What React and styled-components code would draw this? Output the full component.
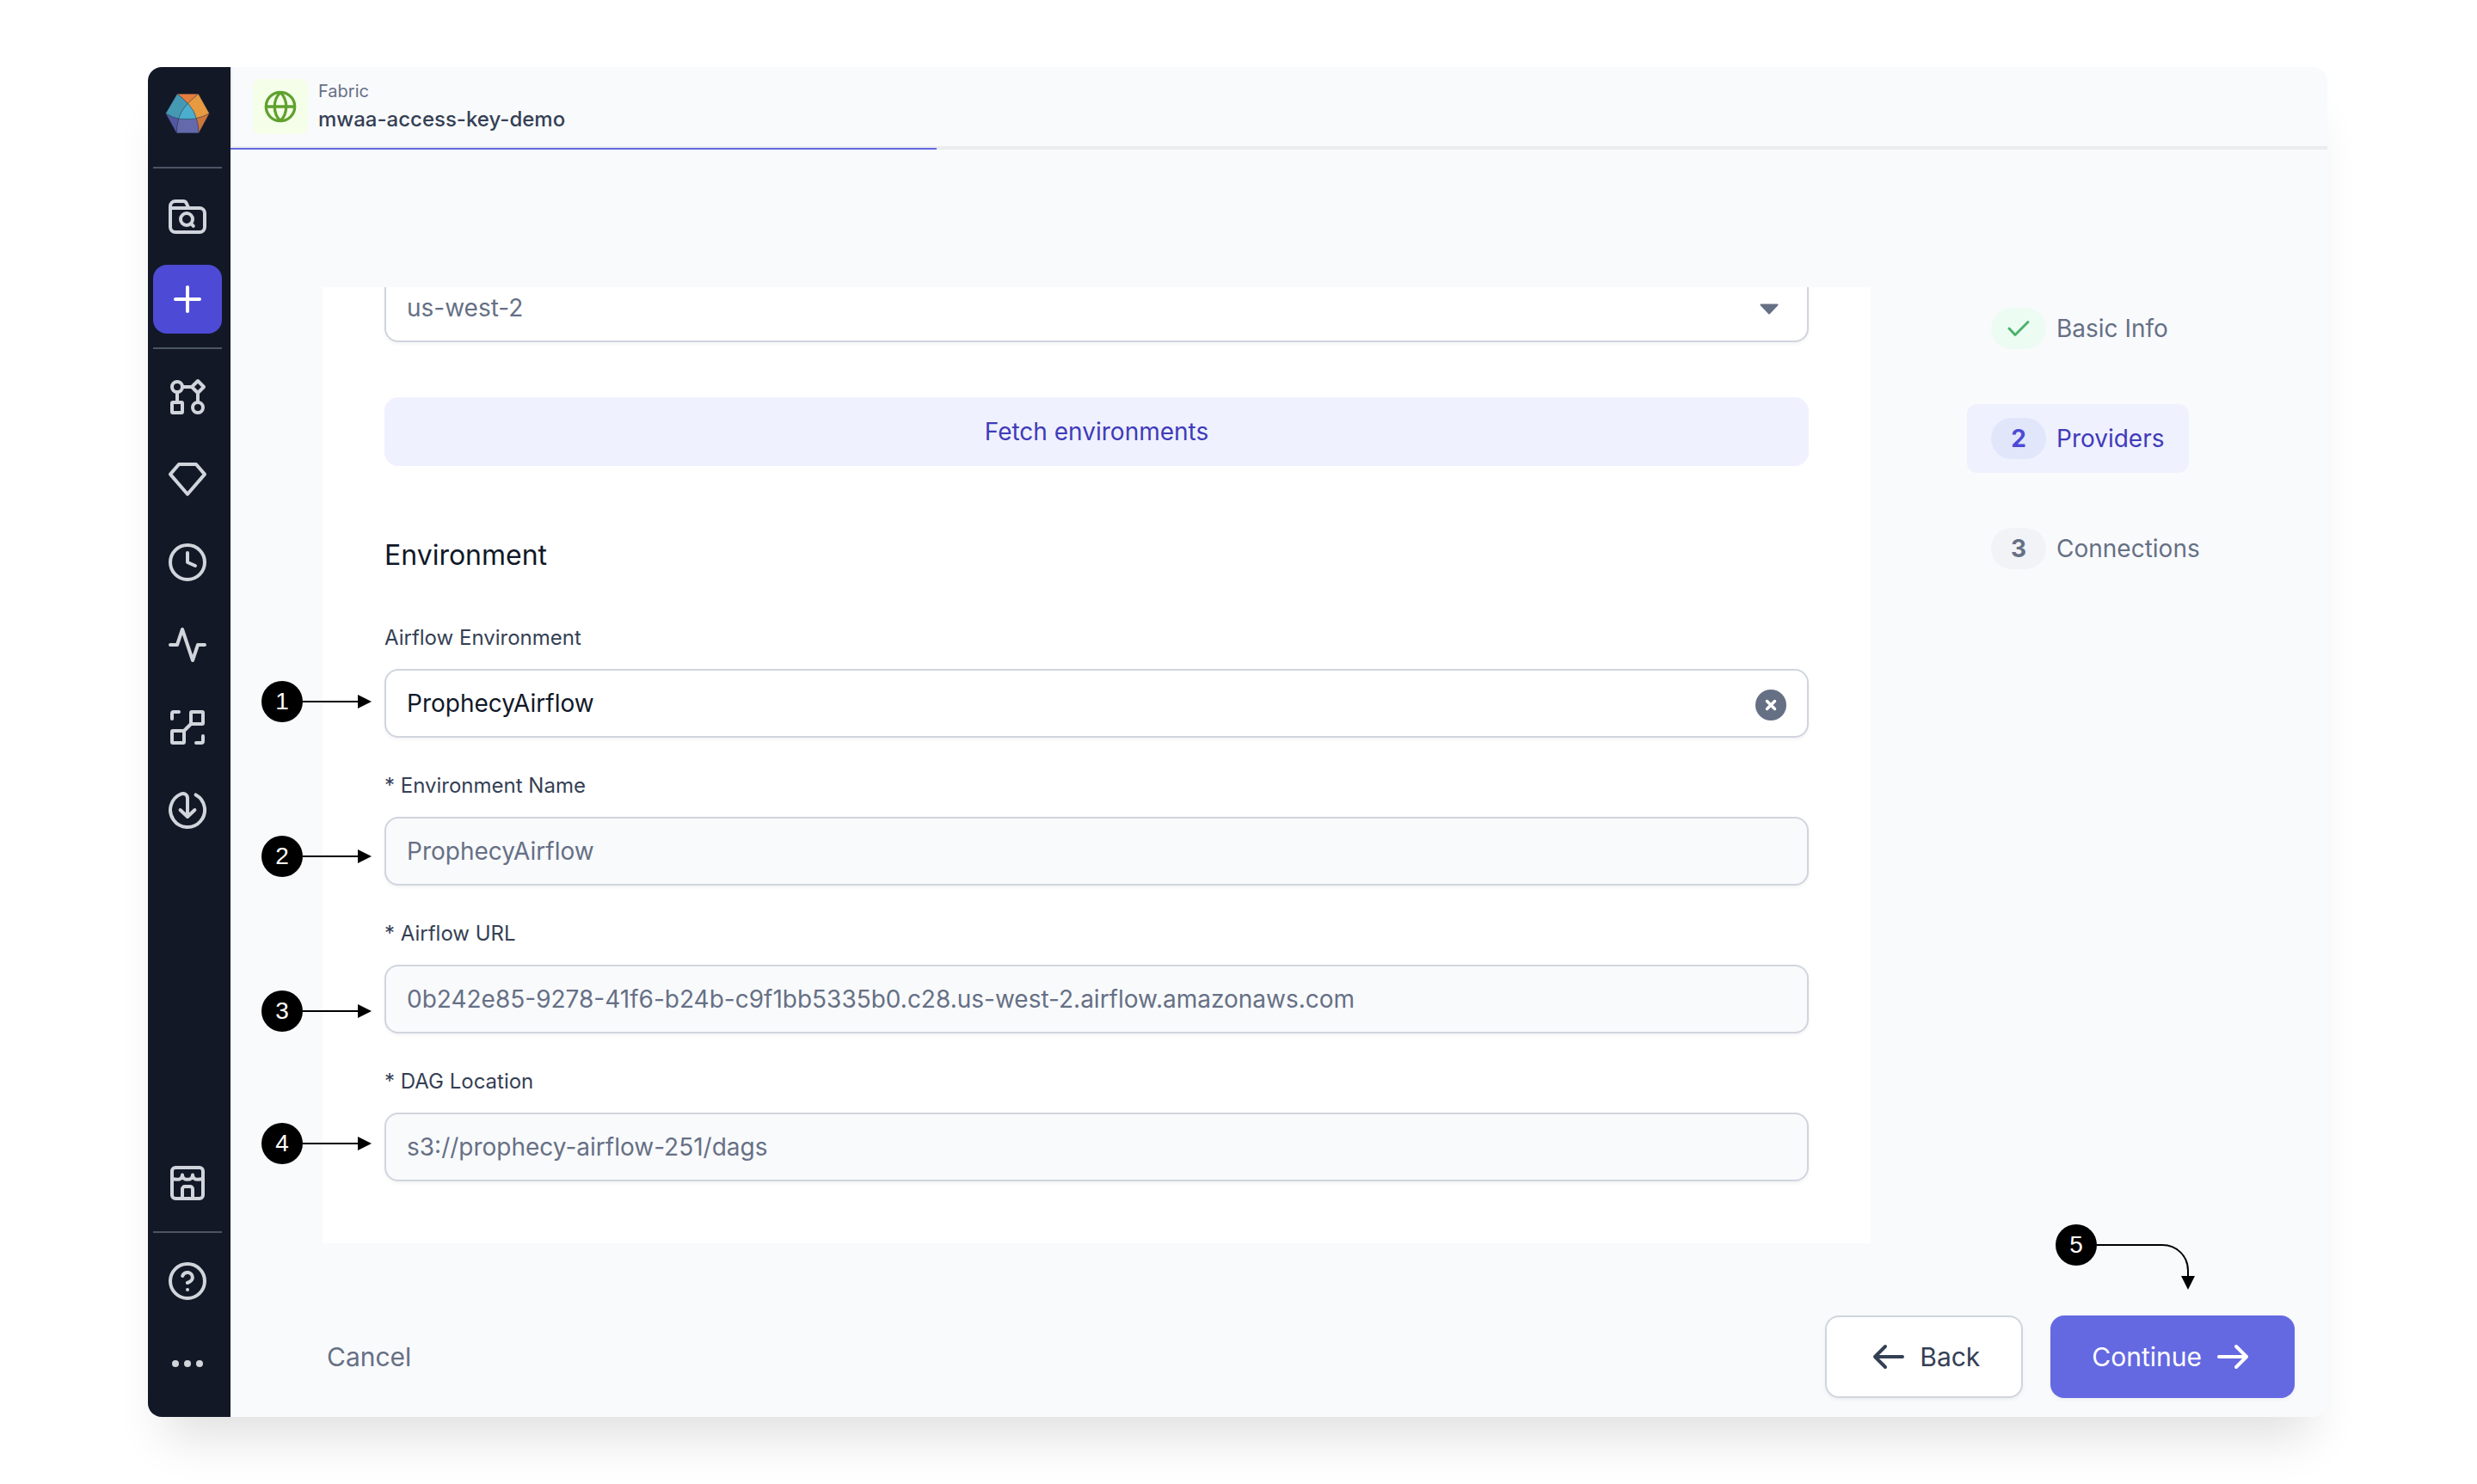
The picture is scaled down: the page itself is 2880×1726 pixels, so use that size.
import React, { useState } from "react";
import styled, { createGlobalStyle, css } from "styled-components";

const color = {
  ink: "#101828",
  label: "#344054",
  muted: "#667085",
  line: "#d0d5dd",
  track: "#ebecee",
  surface: "#f9fafc",
  navy: "#131827",
  navIcon: "#d1d5db",
  navLine: "#4b5565",
  indigo: "#6469e1",
  indigoStrong: "#4d4bd5",
  indigoText: "#403bb9",
  indigoSoft: "#eff1fe",
  indigoPill: "#e1e6fb",
};

const GlobalStyle = createGlobalStyle`
  *, *::before, *::after { box-sizing: border-box; }
  body {
    margin: 0;
    background: #fff;
    color: ${color.ink};
    font-family: Inter, "Liberation Sans", sans-serif;
  }
  button, input, select { font: inherit; color: inherit; margin: 0; }
  svg { display: block; flex: none; }
`;

const Page = styled.div`
  padding: 78px 174px 78px 172px;
`;

const Window = styled.div`
  position: relative;
  display: flex;
  min-height: calc(100vh - 156px);
  border-radius: 16px;
  background: ${color.surface};
  box-shadow: 0 44px 52px -20px rgba(0, 0, 0, 0.12);
`;

/* ---------- sidebar ---------- */

const Sidebar = styled.nav`
  display: flex;
  flex: none;
  flex-direction: column;
  gap: 16px;
  width: 96px;
  padding: 14px 10px 22px 6px;
  border-radius: 16px 0 0 16px;
  background: ${color.navy};
`;

const Brand = styled.a`
  display: flex;
  align-items: center;
  justify-content: center;
  height: 80px;
  margin-bottom: 6px;
`;

const NavButton = styled.button`
  display: flex;
  align-items: center;
  justify-content: center;
  width: 80px;
  height: 80px;
  padding: 0;
  border: 0;
  border-radius: 16px;
  background: ${(p) => (p.$active ? color.indigoStrong : "transparent")};
  color: ${(p) => (p.$active ? "#fff" : color.navIcon)};
  cursor: pointer;
`;

const NavDivider = styled.hr`
  width: 80px;
  height: 2px;
  margin: 0;
  border: 0;
  background: ${color.navLine};
`;

const NavSpacer = styled.div`
  flex: 1;
`;

/* ---------- header ---------- */

const Main = styled.main`
  display: flex;
  flex: 1;
  flex-direction: column;
  min-width: 0;
`;

const Header = styled.header`
  display: flex;
  align-items: flex-start;
  gap: 12px;
  padding: 14px 24px 12px;
  border-left: 2px solid ${color.track};
  border-bottom: 2px solid ${color.track};
`;

const FabricIcon = styled.div`
  display: flex;
  align-items: center;
  justify-content: center;
  width: 64px;
  height: 64px;
  border-radius: 8px;
  background: #f4fee8;
  color: #60a12e;
`;

const Kicker = styled.div`
  font-size: 20px;
  line-height: 28px;
  color: ${color.muted};
`;

const Title = styled.h1`
  margin: 0;
  font-size: 24px;
  font-weight: 500;
  line-height: 38px;
  color: ${color.label};
`;

const Track = styled.div`
  height: 2px;
  background: ${color.track};
`;

const Progress = styled.div`
  height: 100%;
  background: ${color.indigo};
`;

/* ---------- body ---------- */

const Body = styled.div`
  display: flex;
  align-items: flex-start;
  padding: 160px 0 84px 107px;
`;

const Card = styled.form`
  display: flex;
  flex: 1;
  flex-direction: column;
  min-width: 0;
  padding: 0 72px 72px;
  overflow: hidden;
  background: #fff;
`;

const controlBox = css`
  width: 100%;
  height: 80px;
  padding: 0 24px;
  border: 2px solid ${color.line};
  border-radius: 16px;
  box-shadow: 0 2px 4px rgba(16, 24, 40, 0.05);
  font-size: 28px;
  outline: none;
`;

const ScrolledControl = styled.div`
  position: relative;
  margin-top: -16px;
`;

const Select = styled.select`
  ${controlBox}
  display: block;
  appearance: none;
  background: #fff;
  color: ${color.muted};
`;

const SelectCaret = styled.svg`
  position: absolute;
  top: 34px;
  right: 35px;
  pointer-events: none;
`;

const FetchButton = styled.button`
  height: 80px;
  margin-top: 64px;
  padding: 0 32px;
  border: 0;
  border-radius: 16px;
  background: ${color.indigoSoft};
  color: ${color.indigoText};
  font-size: 28px;
  cursor: pointer;
`;

const SectionTitle = styled.h2`
  margin: 84px 0 56px;
  font-size: 32px;
  font-weight: 400;
  line-height: 40px;
`;

const Fields = styled.div`
  display: flex;
  flex-direction: column;
  gap: 36px;
`;

const Field = styled.div`
  display: flex;
  flex-direction: column;
  gap: 16px;
`;

const Label = styled.label`
  font-size: 24px;
  line-height: 40px;
  color: ${color.label};
`;

const InputWrap = styled.div`
  position: relative;
`;

const Input = styled.input`
  ${controlBox}
  display: block;
  background: ${(p) => (p.readOnly ? color.surface : "#fff")};
  color: ${(p) => (p.readOnly ? color.muted : color.ink)};
`;

const ClearButton = styled.button`
  position: absolute;
  top: 24px;
  right: 26px;
  padding: 0;
  border: 0;
  background: none;
  cursor: pointer;
`;

/* ---------- steps ---------- */

const Steps = styled.ol`
  display: flex;
  flex: none;
  flex-direction: column;
  align-items: flex-start;
  gap: 48px;
  width: 419px;
  margin: 0 0 0 112px;
  padding: 8px 0 0;
  list-style: none;
`;

const StepLink = styled.a`
  display: flex;
  align-items: center;
  gap: 12px;
  height: 80px;
  padding: 0 28px;
  border-radius: 12px;
  background: ${(p) => (p.$state === "current" ? color.indigoSoft : "transparent")};
  color: ${(p) => (p.$state === "current" ? color.indigoText : color.muted)};
  font-size: 28px;
  text-decoration: none;
`;

const pill = {
  done: css`background: #edfcf2; color: #4bb36c;`,
  current: css`background: ${color.indigoPill}; color: ${color.indigoStrong};`,
  todo: css`background: #f2f3f7; color: ${color.muted};`,
};

const StepMark = styled.span`
  display: flex;
  align-items: center;
  justify-content: center;
  width: 64px;
  height: 48px;
  border-radius: 24px;
  font-weight: 700;
  ${(p) => pill[p.$state]}
`;

/* ---------- footer ---------- */

const Footer = styled.footer`
  display: flex;
  align-items: center;
  gap: 32px;
  margin-top: auto;
  padding: 0 38px 22px 112px;
`;

const TextButton = styled.button`
  height: 96px;
  margin-right: auto;
  padding: 0;
  border: 0;
  background: none;
  color: ${color.muted};
  font-size: 30px;
  cursor: pointer;
`;

const ActionButton = styled.button`
  display: flex;
  align-items: center;
  gap: 12px;
  height: 96px;
  padding: 0 48px;
  border: ${(p) => (p.$primary ? "0" : `2px solid ${color.line}`)};
  border-radius: 16px;
  background: ${(p) => (p.$primary ? color.indigo : "#fff")};
  box-shadow: 0 2px 4px rgba(16, 24, 40, 0.05);
  color: ${(p) => (p.$primary ? "#fff" : color.label)};
  font-size: 30px;
  cursor: pointer;
`;

/* ---------- numbered callouts ---------- */

const Callout = styled.div`
  position: absolute;
  top: ${(p) => p.$top}px;
  left: 132px;
  display: flex;
  pointer-events: none;
`;

const CornerCallout = styled.div`
  position: absolute;
  right: 154px;
  bottom: 148px;
  display: flex;
  align-items: flex-start;
  pointer-events: none;
`;

const CalloutNumber = styled.span`
  display: flex;
  align-items: center;
  justify-content: center;
  width: 48px;
  height: 48px;
  border-radius: 50%;
  background: #000;
  color: #fff;
  font-family: "Liberation Sans", sans-serif;
  font-size: 28px;
  line-height: 32px;
`;

/* ---------- icons ---------- */

const Icon = ({ children, size = 48 }) => (
  <svg
    width={size}
    height={size}
    viewBox="0 0 24 24"
    fill="none"
    stroke="currentColor"
    strokeWidth="2"
    strokeLinecap="round"
    strokeLinejoin="round"
    aria-hidden="true"
  >
    {children}
  </svg>
);

const icons = {
  browse: (
    <>
      <path d="M2 7h17a3 3 0 0 1 3 3v8a3 3 0 0 1-3 3H5a3 3 0 0 1-3-3V6a3 3 0 0 1 3-3h4.500a2 2 0 0 1 1.800 1.100L12.700 7" />
      <circle cx="11.500" cy="13.500" r="3.500" />
      <path d="M14.200 16.200l1.200 1.200" />
    </>
  ),
  plus: <path d="M12 5v14M5 12h14" />,
  pipeline: (
    <>
      <circle cx="6" cy="6" r="3" />
      <circle cx="18" cy="18" r="3" />
      <rect x="3" y="15" width="6" height="6" rx="0.500" />
      <path d="M18 2.500L21.500 6 18 9.500 14.500 6z" />
      <path d="M9 6h5.500M6 9v6M18 9.500V15" />
    </>
  ),
  gem: <path d="M7 3h10l5 5.800-10 11.600L2 8.800z" />,
  clock: (
    <>
      <circle cx="12" cy="12" r="10" />
      <path d="M12 6.500V12l4.500 2" />
    </>
  ),
  activity: <path d="M22 12h-4l-3 9L9 3l-3 9H2" />,
  lineage: (
    <>
      <rect x="14" y="3" width="7" height="7" rx="0.500" />
      <rect x="3" y="14" width="7" height="7" rx="0.500" />
      <path d="M10 14l4-4M3 7V4a1 1 0 0 1 1-1h3M21 17v3a1 1 0 0 1-1 1h-3" />
    </>
  ),
  download: (
    <>
      <path d="M16.800 3.200A10 10 0 1 1 8.200 2.750C10.300 2 12 3.200 12 5.200V15.800" />
      <path d="M7.800 12l4.200 4 4.200-4" />
    </>
  ),
  store: (
    <>
      <rect x="3" y="3" width="18" height="18" rx="2" />
      <path d="M3 9.300c.8.400 1.800.6 3 .6 1.800 0 3-1 3-2.700 0 1.700 1.200 2.700 3 2.700s3-1 3-2.700c0 1.700 1.200 2.700 3 2.700 1.200 0 2.200-.2 3-.6" />
      <path d="M9 21v-5.500a1.500 1.500 0 0 1 1.500-1.500h3a1.500 1.500 0 0 1 1.500 1.500V21" />
    </>
  ),
  help: (
    <>
      <circle cx="12" cy="12" r="10" />
      <path d="M9.090 9a3 3 0 0 1 5.830 1c0 2-3 3-3 3M12 17h.01" />
    </>
  ),
  more: (
    <g fill="currentColor" stroke="none">
      <circle cx="5" cy="12" r="2" />
      <circle cx="12" cy="12" r="2" />
      <circle cx="19" cy="12" r="2" />
    </g>
  ),
};

const Logo = () => (
  <svg width="52" height="46" viewBox="0 0 154 138" aria-hidden="true">
    <g stroke="#2b3350" strokeWidth="1" strokeLinejoin="round">
      <path fill="#e67e3c" d="M41 1h74Q96 16 78 34 60 15 41 1z" />
      <path fill="#e89a40" d="M115 1l38 68q-21 12-45 17-7-28-30-52Q96 16 115 1z" />
      <path fill="#cb773b" d="M153 69l-37 68q0-28-8-51 24-5 45-17z" />
      <path fill="#6469ac" d="M46 87q31 4 62-1 8 23 8 51H39q0-26 7-50z" />
      <path fill="#5257a0" d="M1 69q20 12 45 18-7 24-7 50z" />
      <path fill="#4599b3" d="M41 1q19 14 37 33-22 22-32 53Q21 81 1 69z" />
      <path fill="#4baece" d="M78 34q23 24 30 52-31 5-62 1 10-31 32-53z" />
    </g>
  </svg>
);

const Globe = () => (
  <svg width="40" height="40" viewBox="0 0 40 40" fill="none" stroke="currentColor" strokeWidth="3.300" aria-hidden="true">
    <circle cx="20" cy="20" r="16.700" />
    <path d="M3.300 20h33.400M20 3.300c-9 9-9 24.400 0 33.400M20 3.300c9 9 9 24.400 0 33.400" />
  </svg>
);

const Check = () => (
  <svg width="28" height="20" viewBox="0 0 28 20" fill="none" stroke="currentColor" strokeWidth="3" strokeLinecap="round" strokeLinejoin="round" aria-hidden="true">
    <path d="M3 10l7 7.500L25 2.500" />
  </svg>
);

const ClearIcon = () => (
  <svg width="36" height="36" viewBox="0 0 36 36" aria-hidden="true">
    <circle cx="18" cy="18" r="18" fill={color.muted} />
    <path d="M13.500 13.500l9 9M22.500 13.500l-9 9" stroke="#fff" strokeWidth="3.500" strokeLinecap="round" />
  </svg>
);

const StraightArrow = () => (
  <svg width="80" height="48" viewBox="0 0 80 48" aria-hidden="true">
    <path d="M0 23h64v-7l16 8-16 8v-7H0z" />
  </svg>
);

const CurvedArrow = () => (
  <svg width="114" height="76" viewBox="0 0 114 76" aria-hidden="true">
    <path d="M0 24h76c17 0 30 13 30 30v8" fill="none" stroke="#000" strokeWidth="2" />
    <path d="M98 60h16l-8 16z" />
  </svg>
);

/* ---------- data ---------- */

const topNav = [
  { id: "browse", label: "Browse" },
  { id: "plus", label: "Create", active: true },
];
const middleNav = [
  { id: "pipeline", label: "Pipelines" },
  { id: "gem", label: "Gems" },
  { id: "clock", label: "Jobs" },
  { id: "activity", label: "Monitoring" },
  { id: "lineage", label: "Lineage" },
  { id: "download", label: "Deployments" },
];
const bottomNav = [
  { id: "help", label: "Help" },
  { id: "more", label: "More" },
];

const lockedFields = [
  { id: "env-name", label: "* Environment Name", value: "ProphecyAirflow" },
  { id: "airflow-url", label: "* Airflow URL", value: "0b242e85-9278-41f6-b24b-c9f1bb5335b0.c28.us-west-2.airflow.amazonaws.com" },
  { id: "dag-location", label: "* DAG Location", value: "s3://prophecy-airflow-251/dags" },
];

const steps = [
  { label: "Basic Info", state: "done" },
  { label: "Providers", state: "current" },
  { label: "Connections", state: "todo" },
];

const callouts = [714, 894, 1074, 1228];

const NavItems = ({ items }) =>
  items.map(({ id, label, active }) => (
    <NavButton key={id} type="button" aria-label={label} $active={active}>
      <Icon>{icons[id]}</Icon>
    </NavButton>
  ));

export default function App() {
  const [environment, setEnvironment] = useState("ProphecyAirflow");
  const progress = 33.67;

  return (
    <>
      <GlobalStyle />
      <Page>
        <Window>
          <Sidebar aria-label="Main">
            <Brand href="#" aria-label="Home">
              <Logo />
            </Brand>
            <NavDivider />
            <NavItems items={topNav} />
            <NavDivider />
            <NavItems items={middleNav} />
            <NavSpacer />
            <NavItems items={[{ id: "store", label: "Package hub" }]} />
            <NavDivider />
            <NavItems items={bottomNav} />
          </Sidebar>

          <Main>
            <Header>
              <FabricIcon>
                <Globe />
              </FabricIcon>
              <div>
                <Kicker>Fabric</Kicker>
                <Title>mwaa-access-key-demo</Title>
              </div>
            </Header>
            <Track role="progressbar" aria-label="Setup progress" aria-valuenow={progress}>
              <Progress style={{ width: `${progress}%` }} />
            </Track>

            <Body>
              <Card id="provider-form" onSubmit={(e) => e.preventDefault()}>
                <ScrolledControl>
                  <Select aria-label="Region" defaultValue="us-west-2">
                    <option>us-west-2</option>
                  </Select>
                  <SelectCaret width="22" height="14" viewBox="0 0 22 14">
                    <path
                      d="M1.500 2.500h19L11 12.500z"
                      fill={color.muted}
                      stroke={color.muted}
                      strokeWidth="2"
                      strokeLinejoin="round"
                    />
                  </SelectCaret>
                </ScrolledControl>
                <FetchButton type="button">Fetch environments</FetchButton>
                <SectionTitle>Environment</SectionTitle>
                <Fields>
                  <Field>
                    <Label htmlFor="airflow-env">Airflow Environment</Label>
                    <InputWrap>
                      <Input id="airflow-env" value={environment} onChange={(e) => setEnvironment(e.target.value)} />
                      <ClearButton type="button" aria-label="Clear" onClick={() => setEnvironment("")}>
                        <ClearIcon />
                      </ClearButton>
                    </InputWrap>
                  </Field>
                  {lockedFields.map(({ id, label, value }) => (
                    <Field key={id}>
                      <Label htmlFor={id}>{label}</Label>
                      <Input id={id} value={value} readOnly />
                    </Field>
                  ))}
                </Fields>
              </Card>

              <Steps>
                {steps.map(({ label, state }, i) => (
                  <li key={label}>
                    <StepLink href="#" $state={state} aria-current={state === "current" ? "step" : undefined}>
                      <StepMark $state={state}>{state === "done" ? <Check /> : i + 1}</StepMark>
                      {label}
                    </StepLink>
                  </li>
                ))}
              </Steps>
            </Body>

            <Footer>
              <TextButton type="button">Cancel</TextButton>
              <ActionButton type="button">
                <Icon>
                  <path d="M20 12H4M10 6l-6 6 6 6" />
                </Icon>
                Back
              </ActionButton>
              <ActionButton type="submit" form="provider-form" $primary>
                Continue
                <Icon>
                  <path d="M4 12h16M14 6l6 6-6 6" />
                </Icon>
              </ActionButton>
            </Footer>
          </Main>

          {callouts.map((top, i) => (
            <Callout key={top} $top={top}>
              <CalloutNumber>{i + 1}</CalloutNumber>
              <StraightArrow />
            </Callout>
          ))}
          <CornerCallout>
            <CalloutNumber>5</CalloutNumber>
            <CurvedArrow />
          </CornerCallout>
        </Window>
      </Page>
    </>
  );
}
